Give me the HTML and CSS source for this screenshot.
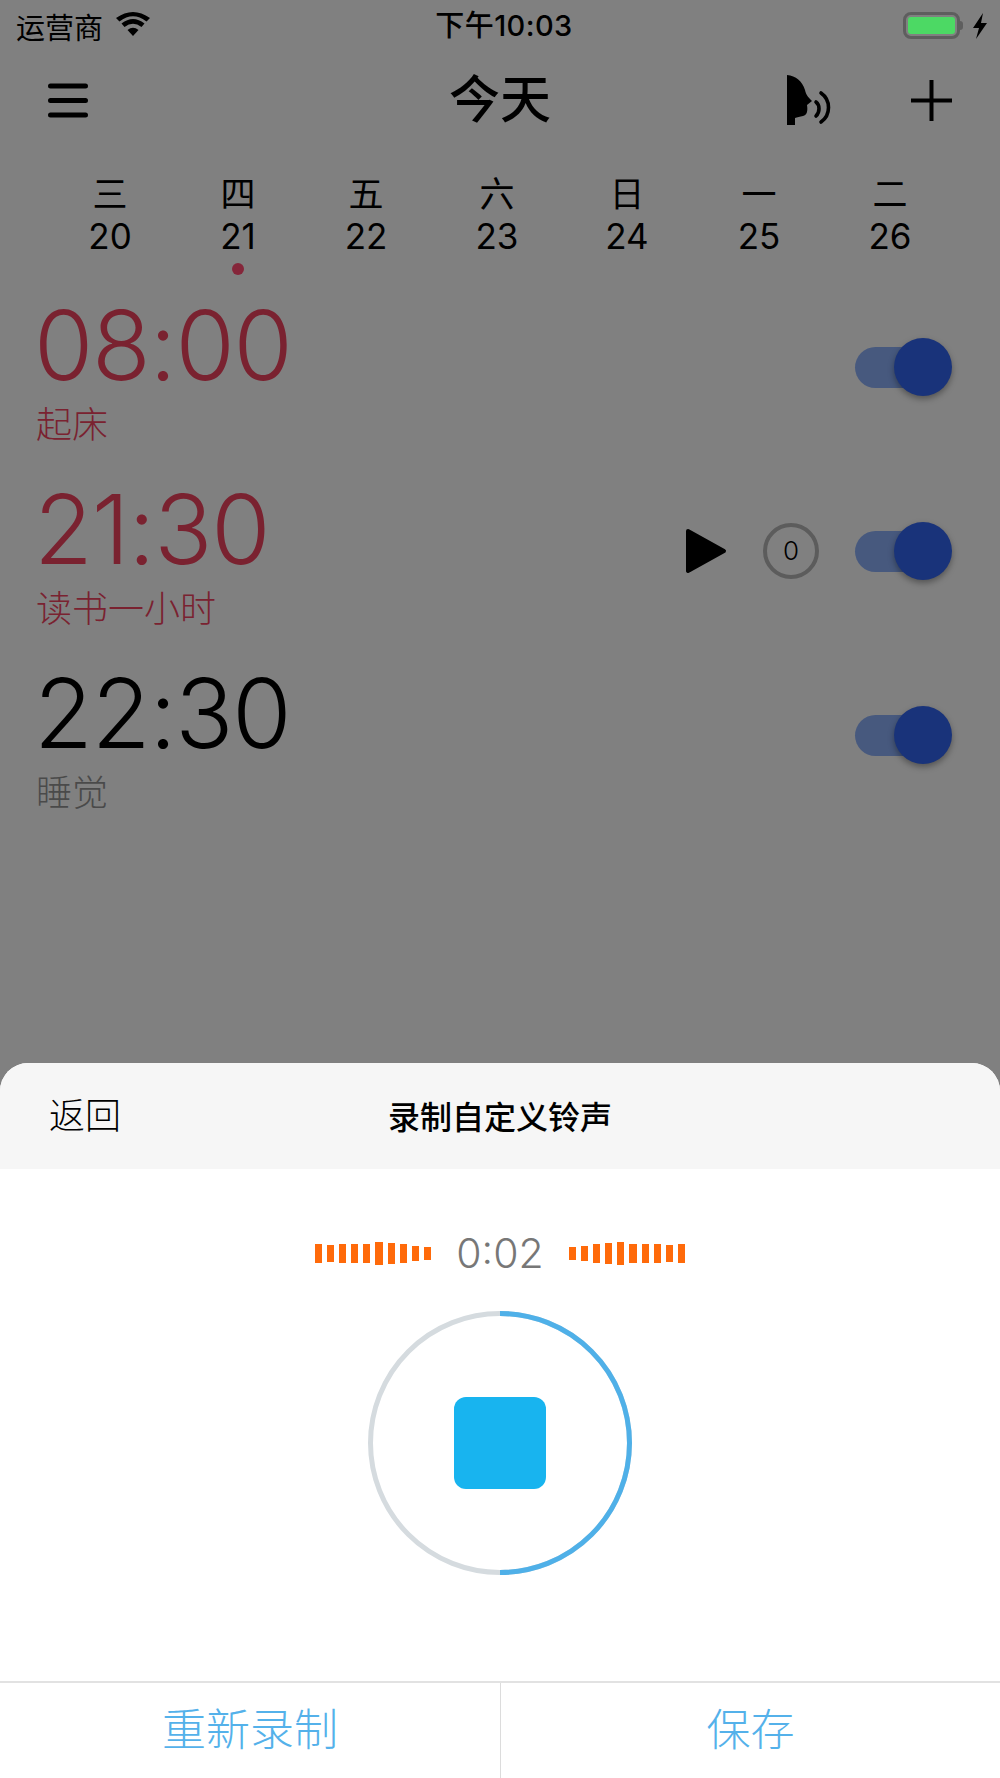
FILE: index.html
```html
<!DOCTYPE html>
<html lang="zh">
<head>
<meta charset="utf-8">
<title>今天</title>
<link rel="stylesheet" href="styles.css">
</head>
<body>
<div class="screen">
  <header class="status">
    <div class="status-left">
      <span class="carrier">运营商</span>
      <svg class="wifi" viewBox="0 0 34 24"><path d="M17 24 L11.5 18 Q17 13.5 22.5 18 Z"/><path d="M8.5 15 L5.5 11.5 Q17 2.5 28.5 11.5 L25.5 15 Q17 8.5 8.5 15 Z"/><path d="M3.5 9.5 L0 6 Q17 -6 34 6 L30.5 9.5 Q17 -1 3.5 9.5 Z"/></svg>
    </div>
    <span class="clock">下午10:03</span>
    <div class="status-right">
      <div class="battery"><div class="battery-fill"></div></div>
      <div class="battery-nub"></div>
      <svg class="bolt" viewBox="0 0 14 26"><path d="M10 0 L0 15 L6 15 L3 26 L14 10 L8 10 Z"/></svg>
    </div>
  </header>

  <nav class="nav">
    <div class="nav-left">
      <svg class="menu" viewBox="0 0 40 35"><path d="M2.5 3 H37.5 M2.5 17.5 H37.5 M2.5 32 H37.5"/></svg>
    </div>
    <h1 class="nav-title">今天</h1>
    <div class="nav-right">
      <svg class="speak" viewBox="0 0 45 50"><path class="speak-head" d="M0 0 C9 1 15 6 18 15 C19 19 20 21 25 26 L20 30 C21 36 20 40 16 41 C13 42 10 42 8 43 L8 50 L0 50 Z"/><path class="speak-wave" d="M29 27 C33 30 33 37 29 41 M34 18 C44 25 44 40 34 47"/></svg>
      <svg class="plus" viewBox="0 0 41 41"><path d="M0 20.5 H41 M20.5 0 V41"/></svg>
    </div>
  </nav>

  <section class="week">
    <div class="day"><span class="day-name">三</span><span class="day-num">20</span></div>
    <div class="day"><span class="day-name">四</span><span class="day-num">21</span><span class="day-dot"></span></div>
    <div class="day"><span class="day-name">五</span><span class="day-num">22</span></div>
    <div class="day"><span class="day-name">六</span><span class="day-num">23</span></div>
    <div class="day"><span class="day-name">日</span><span class="day-num">24</span></div>
    <div class="day"><span class="day-name">一</span><span class="day-num">25</span></div>
    <div class="day"><span class="day-name">二</span><span class="day-num">26</span></div>
  </section>

  <section class="alarms">
    <article class="alarm alarm-red">
      <div class="alarm-text"><div class="alarm-time">08:00</div><div class="alarm-label">起床</div></div>
      <div class="alarm-actions"><div class="toggle"><span class="thumb"></span></div></div>
    </article>
    <article class="alarm alarm-red">
      <div class="alarm-text"><div class="alarm-time">21:30</div><div class="alarm-label">读书一小时</div></div>
      <div class="alarm-actions">
        <svg class="play" viewBox="0 0 42 46"><path d="M3 3 L39 23 L3 43 Z"/></svg>
        <div class="count">0</div>
        <div class="toggle"><span class="thumb"></span></div>
      </div>
    </article>
    <article class="alarm alarm-dark">
      <div class="alarm-text"><div class="alarm-time">22:30</div><div class="alarm-label">睡觉</div></div>
      <div class="alarm-actions"><div class="toggle"><span class="thumb"></span></div></div>
    </article>
  </section>

  <section class="sheet">
    <div class="sheet-head">
      <span class="back">返回</span>
      <span class="sheet-title">录制自定义铃声</span>
    </div>
    <div class="recorder">
      <div class="timer-row">
        <div class="bars">
          <i class="h19"></i><i class="h17"></i><i class="h19"></i><i class="h19"></i><i class="h19"></i><i class="h23"></i><i class="h21"></i><i class="h19"></i><i class="h15"></i><i class="h13"></i>
        </div>
        <span class="timer">0:02</span>
        <div class="bars">
          <i class="h13"></i><i class="h15"></i><i class="h19"></i><i class="h21"></i><i class="h23"></i><i class="h19"></i><i class="h19"></i><i class="h19"></i><i class="h17"></i><i class="h19"></i>
        </div>
      </div>
      <div class="dial">
        <svg class="dial-ring" viewBox="0 0 264 264">
          <circle class="ring-bg" cx="132" cy="132" r="129.5"/>
          <path class="ring-fg" d="M132 2.5 A129.5 129.5 0 0 1 132 261.5"/>
        </svg>
        <div class="stop"></div>
      </div>
    </div>
    <div class="sheet-foot">
      <div class="foot-btn">重新录制</div>
      <div class="foot-btn foot-btn-last">保存</div>
    </div>
  </section>
</div>
</body>
</html>
```

FILE: styles.css
```css
* { box-sizing: border-box; }
html, body { margin: 0; padding: 0; }
body {
  font-family: Inter, "Noto Sans CJK SC", sans-serif;
  background: #808080;
  overflow: hidden;
}
.screen {
  width: 1000px;
  height: 1778px;
  display: flex;
  flex-direction: column;
  background: #808080;
  color: #000;
}

/* Status bar */
.status {
  height: 50px;
  padding: 0 12px 0 16px;
  display: grid;
  grid-template-columns: 1fr auto 1fr;
  align-items: center;
}
.status-left { display: flex; align-items: center; gap: 13px; }
.carrier { font: 400 29px/50px "Noto Sans CJK SC", sans-serif; }
.wifi { width: 34px; height: 24px; fill: #000; margin-top: -4px; }
.clock { font: 500 29px/50px Inter, "Noto Sans CJK SC", sans-serif; letter-spacing: .4px; margin: 1px 0 0 4px; }
.status-right { display: flex; align-items: center; justify-content: flex-end; }
.battery {
  width: 57px;
  height: 27px;
  border: 3px solid #5e5e5e;
  border-radius: 8px;
  padding: 2px;
}
.battery-fill { height: 100%; background: #4cd964; border-radius: 3px; }
.battery-nub {
  width: 3px;
  height: 9px;
  background: #5e5e5e;
  border-radius: 0 3px 3px 0;
  margin-right: 9px;
}
.bolt { width: 16px; height: 26px; fill: #000; }

/* Nav */
.nav {
  height: 100px;
  padding: 0 48px;
  display: grid;
  grid-template-columns: 1fr auto 1fr;
  align-items: center;
}
.nav-left { display: flex; }
.menu { width: 40px; height: 35px; fill: none; stroke: #000; stroke-width: 5; stroke-linecap: round; }
.nav-title { margin: 0 0 8px; font: 500 51px/92px "Noto Sans CJK SC", sans-serif; }
.nav-right { display: flex; justify-content: flex-end; align-items: center; gap: 79px; }
.speak { width: 45px; height: 50px; }
.speak-head { fill: #000; }
.speak-wave { fill: none; stroke: #000; stroke-width: 3.6; stroke-linecap: round; }
.plus { width: 41px; height: 41px; fill: none; stroke: #000; stroke-width: 4; }

/* Week: the columns of the source are slightly uneven */
.week {
  height: 125px;
  padding: 21px 0 0 46px;
  display: grid;
  grid-template-columns: 128px 128px 128px 134px 126px 138px 124px;
}
.day { display: flex; flex-direction: column; align-items: center; }
.day-name { font: 400 35px/42px "Noto Sans CJK SC", sans-serif; }
.day-num { font: 400 35px/40px Inter, sans-serif; margin-top: 3px; }
.day-dot { width: 12px; height: 12px; border-radius: 50%; background: #85263a; margin-top: 7px; }

/* Alarms */
.alarms { display: flex; flex-direction: column; }
.alarm {
  height: 184px;
  padding: 0 60px 0 38px;
  display: flex;
  align-items: center;
  justify-content: space-between;
}
.alarm-red { color: #7a2230; }
.alarm-dark { color: #000; }
.alarm-text { display: flex; flex-direction: column; padding-top: 5px; }
.alarm-time { font: 300 96px/104px Inter, sans-serif; letter-spacing: -1.2px; margin-left: -4px; }
.alarm-label { font: 300 36px/48px "Noto Sans CJK SC", sans-serif; margin: 1px 0 0 -2px; }
.alarm-dark .alarm-label { color: #4a4a4a; }
.alarm-actions { display: flex; align-items: center; }
.toggle {
  width: 85px;
  height: 41px;
  border-radius: 21px;
  background: #47597e;
  display: flex;
  justify-content: flex-end;
  align-items: center;
}
.thumb {
  width: 58px;
  height: 58px;
  flex: none;
  border-radius: 50%;
  background: #19337a;
  box-shadow: 0 3px 6px rgba(0,0,0,.35);
  margin-right: -12px;
}
.play { width: 42px; height: 46px; fill: #000; stroke: #000; stroke-width: 4; stroke-linejoin: round; margin-right: 36px; }
.count {
  width: 56px;
  height: 56px;
  border: 4px solid #5c5c5c;
  border-radius: 50%;
  font: 300 26px/48px Inter, sans-serif;
  text-align: center;
  color: #000;
  margin-right: 36px;
}

/* Sheet */
.sheet {
  margin-top: auto;
  height: 715px;
  background: #fff;
  border-radius: 28px 28px 0 0;
  overflow: hidden;
  display: flex;
  flex-direction: column;
}
.sheet-head {
  height: 106px;
  flex: none;
  background: #f6f6f6;
  position: relative;
  display: flex;
  align-items: center;
  justify-content: center;
}
.back {
  position: absolute;
  left: 49px;
  top: 25px;
  font: 300 36px/50px "Noto Sans CJK SC", sans-serif;
  color: #000;
}
.sheet-title { font: 500 32px/50px "Noto Sans CJK SC", sans-serif; color: #000; margin-top: -3px; }
.recorder {
  flex: 1;
  display: flex;
  flex-direction: column;
  align-items: center;
}
.timer-row {
  margin-top: 59px;
  height: 50px;
  display: flex;
  align-items: center;
  justify-content: center;
}
.timer {
  width: 138px;
  text-align: center;
  font: 350 41px/50px Inter, sans-serif;
  color: #777;
}
.bars { display: flex; align-items: center; gap: 5px; width: 116px; }
.bars i { display: block; width: 7.1px; background: #ff6a0a; }
.h13 { height: 13px; }
.h15 { height: 15px; }
.h17 { height: 17px; }
.h19 { height: 19px; }
.h21 { height: 21px; }
.h23 { height: 23px; }
.dial {
  margin-top: 33px;
  width: 264px;
  height: 264px;
  position: relative;
  display: flex;
  align-items: center;
  justify-content: center;
}
.dial-ring { position: absolute; inset: 0; width: 264px; height: 264px; }
.ring-bg { fill: none; stroke: #d5dbdf; stroke-width: 5; }
.ring-fg { fill: none; stroke: #4fb0e8; stroke-width: 5; }
.stop { width: 92px; height: 92px; background: #18b4ef; border-radius: 12px; position: relative; }
.sheet-foot {
  height: 97px;
  flex: none;
  border-top: 2px solid #e2e2e2;
  display: grid;
  grid-template-columns: 1fr 1fr;
}
.foot-btn {
  display: flex;
  align-items: center;
  justify-content: center;
  font: 300 44px/56px "Noto Sans CJK SC", sans-serif;
  color: #54b1ea;
  padding-bottom: 8px;
}
.foot-btn-last { border-left: 1px solid #dcdcdc; }
```
